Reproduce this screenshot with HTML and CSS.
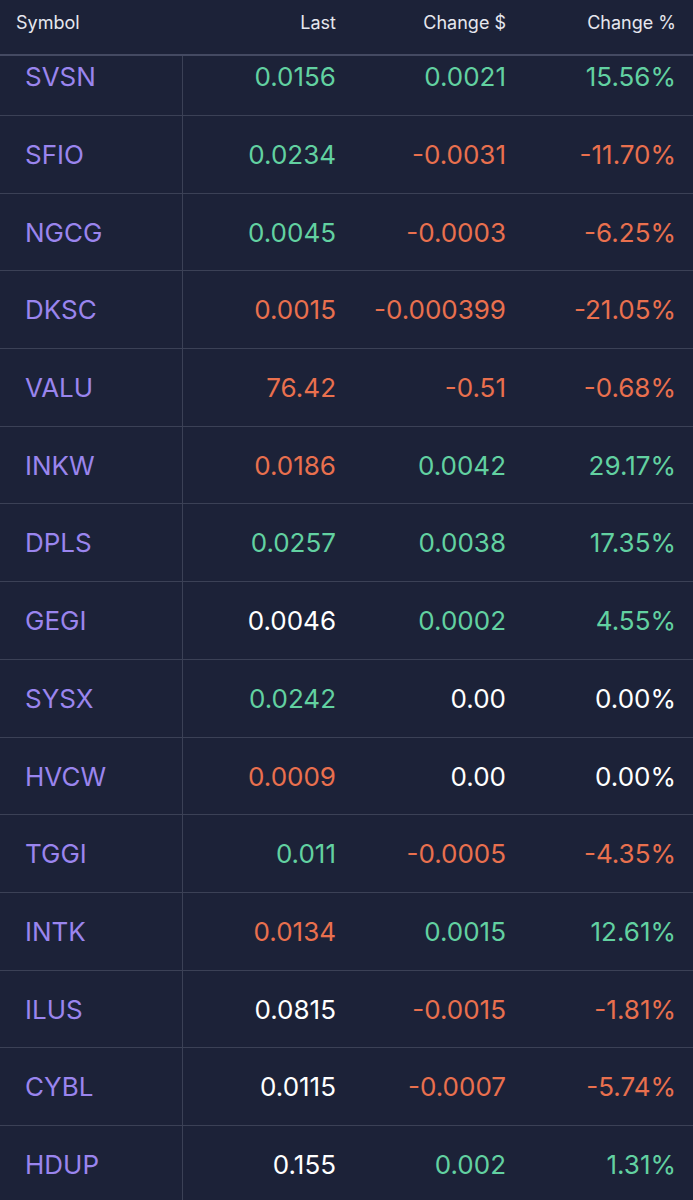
FILE: index.html
```html
<!DOCTYPE html>
<html lang="en">
<head>
  <meta charset="UTF-8">
  <title>Watchlist</title>
  <link rel="stylesheet" href="styles.css">
</head>
<body>
  <div id="quotes">
    <div class="head">
      <span class="sym">Symbol</span>
      <span>Last</span>
      <span>Change $</span>
      <span>Change %</span>
    </div>
    <div class="body">
      <div class="rows">
        <div class="row"><span class="sym">SVSN</span><span class="up">0.0156</span><span class="up">0.0021</span><span class="up">15.56%</span></div>
        <div class="row"><span class="sym">SFIO</span><span class="up">0.0234</span><span class="down">-0.0031</span><span class="down">-11.70%</span></div>
        <div class="row"><span class="sym">NGCG</span><span class="up">0.0045</span><span class="down">-0.0003</span><span class="down">-6.25%</span></div>
        <div class="row"><span class="sym">DKSC</span><span class="down">0.0015</span><span class="down">-0.000399</span><span class="down">-21.05%</span></div>
        <div class="row"><span class="sym">VALU</span><span class="down">76.42</span><span class="down">-0.51</span><span class="down">-0.68%</span></div>
        <div class="row"><span class="sym">INKW</span><span class="down">0.0186</span><span class="up">0.0042</span><span class="up">29.17%</span></div>
        <div class="row"><span class="sym">DPLS</span><span class="up">0.0257</span><span class="up">0.0038</span><span class="up">17.35%</span></div>
        <div class="row"><span class="sym">GEGI</span><span>0.0046</span><span class="up">0.0002</span><span class="up">4.55%</span></div>
        <div class="row"><span class="sym">SYSX</span><span class="up">0.0242</span><span>0.00</span><span>0.00%</span></div>
        <div class="row"><span class="sym">HVCW</span><span class="down">0.0009</span><span>0.00</span><span>0.00%</span></div>
        <div class="row"><span class="sym">TGGI</span><span class="up">0.011</span><span class="down">-0.0005</span><span class="down">-4.35%</span></div>
        <div class="row"><span class="sym">INTK</span><span class="down">0.0134</span><span class="up">0.0015</span><span class="up">12.61%</span></div>
        <div class="row"><span class="sym">ILUS</span><span>0.0815</span><span class="down">-0.0015</span><span class="down">-1.81%</span></div>
        <div class="row"><span class="sym">CYBL</span><span>0.0115</span><span class="down">-0.0007</span><span class="down">-5.74%</span></div>
        <div class="row"><span class="sym">HDUP</span><span>0.155</span><span class="up">0.002</span><span class="up">1.31%</span></div>
      </div>
    </div>
  </div>
</body>
</html>
```
FILE: styles.css
```css
html, body{
  margin: 0;
  background: #1c2238;
}
#quotes{
  width: 693px;
  height: 1200px;
  overflow: hidden;
  font-family: Inter, "Liberation Sans", sans-serif;
  color: #ffffff;
}
.head, .row{
  display: grid;
  grid-template-columns: 182px 171px 170px 170px;
}
.head{
  height: 56px;
  padding-bottom: 9px;
  box-sizing: border-box;
  align-items: center;
  border-bottom: 2px solid #444a62;
  font-size: 18px;
  color: #e6e7ee;
}
.head span,
.row span{
  text-align: right;
  padding-right: 17px;
}
.head .sym{
  text-align: left;
  padding-left: 16px;
}
.body{
  overflow: hidden;
}
.rows{
  margin-top: -17.7px;
}
.row{
  height: 77.69px;
  box-sizing: border-box;
  align-items: center;
  border-bottom: 1px solid #3b4156;
  font-size: 26px;
}
.row span{
  line-height: 77px;
}
.row span:nth-child(2){
  border-left: 1px solid #3b4156;
}
.row .sym{
  text-align: left;
  padding-left: 25px;
  color: #9a85ee;
}
.up{
  color: #62d1a1;
}
.down{
  color: #e9704e;
}
```
